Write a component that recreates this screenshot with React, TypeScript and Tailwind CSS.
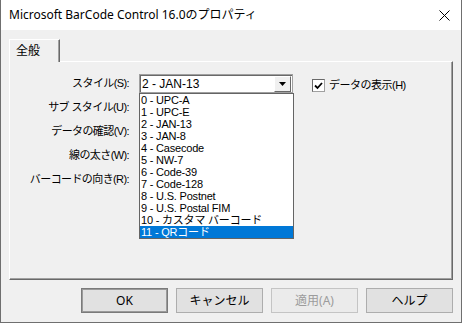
import React from "react";

const ui = { fontFamily: '"Noto Sans", "Noto Sans CJK JP", sans-serif' };
const gothic = { fontFamily: '"Liberation Sans", "Noto Sans CJK JP", sans-serif' };

const styles = [
  "0 - UPC-A",
  "1 - UPC-E",
  "2 - JAN-13",
  "3 - JAN-8",
  "4 - Casecode",
  "5 - NW-7",
  "6 - Code-39",
  "7 - Code-128",
  "8 - U.S. Postnet",
  "9 - U.S. Postal FIM",
  "10 - カスタマ バーコード",
  "11 - QRコード",
];

const labels = [
  "スタイル(S):",
  "サブ スタイル(U):",
  "データの確認(V):",
  "線の太さ(W):",
  "バーコードの向き(R):",
];

function DialogButton({
  children,
  disabled,
  isDefault,
}: {
  children: React.ReactNode;
  disabled?: boolean;
  isDefault?: boolean;
}) {
  return (
    <button
      type="button"
      disabled={disabled}
      className={
        "flex h-[25px] w-[87px] items-center justify-center border text-[12px] " +
        (isDefault
          ? "border-[#7a7a7a] bg-[#e1e1e1] text-black shadow-[inset_0_0_0_1px_#9a9a9a]"
          : disabled
            ? "border-[#c4c4c4] bg-[#ebebeb] text-[#9c9c9c]"
            : "border-[#adadad] bg-[#e1e1e1] text-black")
      }
    >
      {children}
    </button>
  );
}

export default function App() {
  return (
    <div
      className="flex h-[323px] w-[462px] flex-col border-x border-b border-[#6f6f6f] bg-[#f0f0f0] text-black"
      style={ui}
    >
      {/* title bar */}
      <div className="flex h-[30px] items-center justify-between bg-white pl-[8px] pr-[10px]">
        <span className="text-[12px]">Microsoft BarCode Control 16.0のプロパティ</span>
        <svg width="11" height="11" viewBox="0 0 11 11" className="mr-[1px]">
          <path d="M0.5 0.5 L10.5 10.5 M10.5 0.5 L0.5 10.5" stroke="#000" strokeWidth="1" />
        </svg>
      </div>

      <div className="flex flex-1 flex-col px-[8px] pt-[9px]">
        {/* tab strip */}
        <div className="flex h-[22px] items-end">
          <div className="relative z-10 -mb-[1px] flex h-[23px] w-[51px] items-center border-l border-t border-r border-l-white border-t-white border-r-[#696969] bg-[#f0f0f0] pl-[6px] text-[12px] shadow-[inset_-1px_0_0_#a0a0a0]">
            全般
          </div>
        </div>

        {/* panel */}
        <div className="relative h-[219px] border border-l-white border-t-white border-r-[#696969] border-b-[#696969] shadow-[inset_-1px_-1px_0_#a0a0a0]">
          <div className="flex pt-[9px]" style={gothic}>
            <div className="flex w-[119px] flex-col">
              {labels.map((l) => (
                <div key={l} className="flex h-[24px] items-center justify-end text-[11px] tracking-[-0.6px]">
                  {l}
                </div>
              ))}
            </div>

            <div className="relative ml-[10px] mt-[3px] h-[19px] w-[154px]">
              {/* combo */}
              <div className="flex h-[19px] items-center border border-[#a0a0a0] bg-white shadow-[inset_1px_1px_0_#696969]">
                <span className="pl-[2px] text-[12px] leading-none">2 - JAN-13</span>
                <div className="ml-auto mr-[1px] flex h-[16px] w-[17px] items-center justify-center border border-t-white border-l-white border-r-[#696969] border-b-[#696969] bg-[#f0f0f0]">
                  <svg width="7" height="4" viewBox="0 0 7 4">
                    <path d="M0 0 H7 L3.5 4 Z" fill="#000" />
                  </svg>
                </div>
              </div>

              {/* dropdown list */}
              <div className="absolute left-0 top-[19px] z-20 w-[155px] border border-[#646464] bg-white">
                {styles.map((s, i) => (
                  <div
                    key={s}
                    className={
                      "flex h-[12px] items-center overflow-hidden whitespace-nowrap pl-[1px] text-[11px] leading-[12px] tracking-[-0.2px] " +
                      (i === 11 ? "bg-[#0078d7] text-white" : "text-black")
                    }
                  >
                    {s}
                  </div>
                ))}
              </div>
            </div>

            <div className="ml-[19px] mt-[8px] flex h-[13px] items-center gap-[4px]">
              <div className="flex h-[13px] w-[13px] items-center justify-center border border-[#a0a0a0] border-l-[#696969] border-t-[#696969] bg-white">
                <svg width="9" height="8" viewBox="0 0 9 8">
                  <path d="M1 3.5 L3.5 6 L8 1" stroke="#000" strokeWidth="1.8" fill="none" />
                </svg>
              </div>
              <span className="text-[11px] tracking-[-0.5px]">データの表示(H)</span>
            </div>
          </div>
        </div>

        {/* buttons */}
        <div className="mt-[8px] flex justify-end gap-[8px]">
          <DialogButton isDefault>OK</DialogButton>
          <DialogButton>キャンセル</DialogButton>
          <DialogButton disabled>適用(A)</DialogButton>
          <DialogButton>ヘルプ</DialogButton>
        </div>
      </div>
    </div>
  );
}
